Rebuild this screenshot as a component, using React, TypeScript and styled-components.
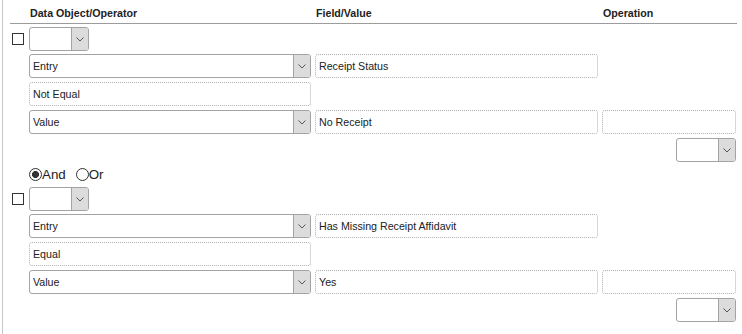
import React from "react";
import styled, { createGlobalStyle } from "styled-components";

const GlobalStyle = createGlobalStyle`
  html, body {
    margin: 0;
    padding: 0;
    background: #ffffff;
  }
  body {
    font-family: "Liberation Sans", Arial, sans-serif;
    color: #222222;
  }
`;

interface Condition {
  field: string;
  operator: string;
  value: string;
}

const conditions: Condition[] = [
  { field: "Receipt Status", operator: "Not Equal", value: "No Receipt" },
  { field: "Has Missing Receipt Affidavit", operator: "Equal", value: "Yes" },
];

const Chevron: React.FC = () => (
  <svg width="8" height="5" viewBox="0 0 8 5">
    <path d="M0.5 0.5 L4 4 L7.5 0.5" fill="none" stroke="#555" strokeWidth="1" />
  </svg>
);

interface SelectProps {
  value?: string;
  width?: number;
}

const Select: React.FC<SelectProps> = ({ value, width }) => (
  <SelectBox $width={width}>
    <SelectText>{value}</SelectText>
    <ArrowButton>
      <Chevron />
    </ArrowButton>
  </SelectBox>
);

const ConditionBlock: React.FC<{ condition: Condition }> = ({ condition }) => (
  <Block>
    <TopRow>
      <Check type="checkbox" />
      <Select width={60} />
    </TopRow>
    <Row>
      <Cell $col={2}>
        <Select value="Entry" />
      </Cell>
      <Cell $col={3}>
        <Field>{condition.field}</Field>
      </Cell>
    </Row>
    <Row>
      <Cell $col={2}>
        <Field>{condition.operator}</Field>
      </Cell>
    </Row>
    <Row>
      <Cell $col={2}>
        <Select value="Value" />
      </Cell>
      <Cell $col={3}>
        <Field>{condition.value}</Field>
      </Cell>
      <Cell $col={4}>
        <Field />
      </Cell>
    </Row>
    <Row>
      <Cell $col={4} $end>
        <Select width={60} />
      </Cell>
    </Row>
  </Block>
);

const App: React.FC = () => {
  return (
    <>
      <GlobalStyle />
      <Panel>
        <HeaderRow>
          <HeaderCell $col={2}>Data Object/Operator</HeaderCell>
          <HeaderCell $col={3}>Field/Value</HeaderCell>
          <HeaderCell $col={4}>Operation</HeaderCell>
        </HeaderRow>
        <ConditionBlock condition={conditions[0]} />
        <RadioRow>
          <Cell $col={2}>
            <RadioLabel>
              <Radio type="radio" name="join" defaultChecked />
              And
            </RadioLabel>
            <RadioLabel>
              <Radio type="radio" name="join" />
              Or
            </RadioLabel>
          </Cell>
        </RadioRow>
        <ConditionBlock condition={conditions[1]} />
      </Panel>
    </>
  );
};

export default App;

const Panel = styled.div`
  margin-left: 2px;
  min-height: 334px;
  box-sizing: border-box;
  border-left: 1px solid #c8c8c8;
  padding-left: 7px;
  width: 735px;
`;

const Grid = styled.div`
  display: grid;
  grid-template-columns: 15px 282px 283px 134px;
  column-gap: 4px;
`;

const HeaderRow = styled(Grid)`
  height: 24px;
  box-sizing: border-box;
  border-bottom: 1px solid #9c9c9c;
  padding-top: 7px;
`;

const HeaderCell = styled.div<{ $col: number }>`
  grid-column: ${(p) => p.$col};
  padding-left: 1px;
  font-size: 8pt;
  line-height: 13px;
  font-weight: bold;
  color: #222;
`;

const Block = styled.div`
  display: flex;
  flex-direction: column;
  gap: 4px;
  margin-top: 3px;
`;

const Row = styled(Grid)`
  height: 24px;
`;

const TopRow = styled(Row)`
  align-items: center;
  margin-bottom: -1px;
`;

const Cell = styled.div<{ $col: number; $end?: boolean }>`
  grid-column: ${(p) => p.$col};
  display: flex;
  align-items: center;
  justify-content: ${(p) => (p.$end ? "flex-end" : "flex-start")};
`;

const Check = styled.input`
  appearance: none;
  margin: 0 0 0 2px;
  width: 12px;
  height: 12px;
  box-sizing: border-box;
  border: 1px solid #333;
  background: #fff;
`;

const SelectBox = styled.div<{ $width?: number }>`
  display: flex;
  width: ${(p) => (p.$width ? `${p.$width}px` : "100%")};
  height: 24px;
  box-sizing: border-box;
  border: 1px solid #a3a3a3;
  border-radius: 3px;
  overflow: hidden;
  background: #fff;
`;

const SelectText = styled.span`
  flex: 1;
  padding-left: 3px;
  font-size: 8pt;
  line-height: 22px;
  color: #222;
  white-space: nowrap;
`;

const ArrowButton = styled.span`
  width: 16px;
  display: flex;
  align-items: center;
  justify-content: center;
  background: #dcdcdc;
  border-left: 1px solid #a3a3a3;
`;

const Field = styled.div`
  width: 100%;
  height: 24px;
  box-sizing: border-box;
  border: 1px dotted #b0b0b0;
  border-radius: 3px;
  padding-left: 3px;
  font-size: 8pt;
  line-height: 22px;
  color: #222;
  white-space: nowrap;
`;

const RadioRow = styled(Grid)`
  height: 13px;
  margin: 6px 0 6px;
`;

const RadioLabel = styled.label`
  display: flex;
  align-items: center;
  font-size: 10pt;
  line-height: 13px;
  color: #222;
  margin-right: 10px;
`;

const Radio = styled.input`
  appearance: none;
  margin: 0;
  width: 13px;
  height: 13px;
  box-sizing: border-box;
  border: 1px solid #333;
  border-radius: 50%;
  background: #fff;
  &:checked {
    background: radial-gradient(circle, #333 0 3.2px, #fff 3.8px);
  }
`;
